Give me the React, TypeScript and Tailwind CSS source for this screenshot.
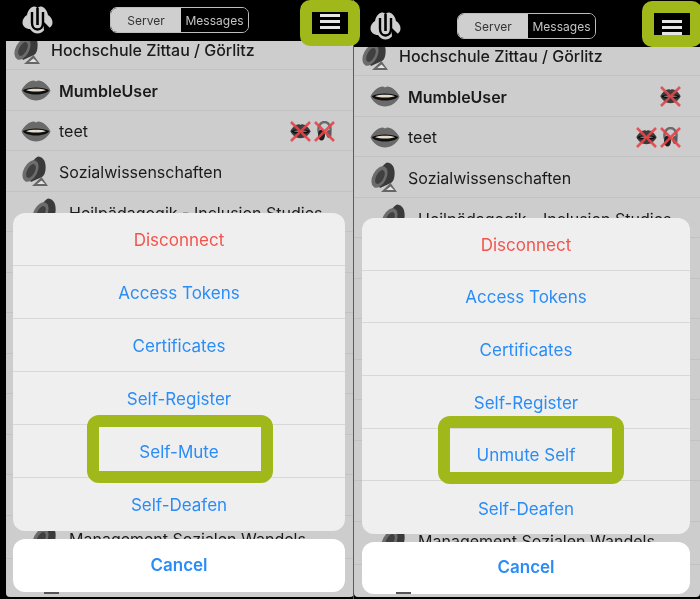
const FONT = "font-['Inter','Liberation_Sans',sans-serif]";

function Lips({ size = 30, dark }: { size?: number; dark?: boolean }) {
  return (
    <svg width={size} height={size * 0.7} viewBox="0 0 30 21" className="shrink-0">
      <path d="M0.500 10.500C3 4.500 9 0.500 12.500 0.500C14 0.500 14.500 1.500 15 1.500C15.500 1.500 16 0.500 17.500 0.500C21 0.500 27 4.500 29.500 10.500C27 16.500 21 20.500 15 20.500C9 20.500 3 16.500 0.500 10.500Z" fill={dark ? "#3c3c3c" : "#6a6a6a"} />
      <path d="M2 10C8 6.500 22 6.500 28 10C28 12 23 14.500 15 14.500C7 14.500 2 12 2 10Z" fill="#0e0e0e" />
      <path d="M5 10.200C10 8.400 20 8.400 25 10.200C20 12 10 12 5 10.200Z" fill={dark ? "#777" : "#e6dccb"} />
    </svg>
  );
}

function Horn() {
  return (
    <svg width="30" height="31" viewBox="0 0 30 31" className="shrink-0">
      <path d="M17 0.500C21 0.500 24 4 24.500 9C25 14 24 19 21 21L10 26C6 22 8 5 17 0.500Z" fill="#3a3a3a" />
      <ellipse cx="9.500" cy="15" rx="6.800" ry="11.500" transform="rotate(28 9.500 15)" fill="#6c6c6c" />
      <ellipse cx="10" cy="15" rx="3.800" ry="7.500" transform="rotate(28 10 15)" fill="#404040" />
      <path d="M11 30L20.500 21L27 30Z" fill="#666" />
      <path d="M16 28L20.500 24.500L24 28Z" fill="#e4e4e4" />
    </svg>
  );
}

function Cross({ children }: { children: React.ReactNode }) {
  return (
    <span className="relative flex h-[21px] w-[21px] items-center justify-center">
      {children}
      <svg width="21" height="21" viewBox="0 0 21 21" className="absolute inset-0">
        <path d="M1 1L20 20M20 1L1 20" stroke="#e0484d" strokeWidth="2.600" opacity="0.9" />
      </svg>
    </span>
  );
}

function MutedLips() {
  return <Cross><Lips size={21} dark /></Cross>;
}

function MutedHeadset() {
  return (
    <Cross>
      <svg width="17" height="20" viewBox="0 0 17 20">
        <path d="M3 12C1 5 5 1 8.500 1C12 1 16 5 14 12" fill="none" stroke="#6a6a6a" strokeWidth="2.500" />
        <ellipse cx="5.500" cy="14" rx="3.500" ry="5.500" fill="#1c1c1c" />
        <ellipse cx="13" cy="13" rx="2.500" ry="4" fill="#5c5c5c" />
      </svg>
    </Cross>
  );
}

function Logo() {
  return (
    <svg width="31" height="28" viewBox="0 0 31 28" className="shrink-0">
      <path d="M5 9C6 3 10 0.500 12.500 0.500C14 0.500 15 1.500 15.500 2.500C16 1.500 17 0.500 18.500 0.500C21 0.500 25 3 26 9C29 11 30.500 13.500 30.500 16.500C30.500 20.500 27 23 23 23C21 26 18 27.500 15.500 27.500C13 27.500 10 26 8 23C4 23 0.500 20.500 0.500 16.500C0.500 13.500 2 11 5 9Z" fill="#cfcfcf" />
      <path d="M10 6V17C10 21 12.500 23.500 15.500 23.500C18.500 23.500 21 21 21 17V6" fill="none" stroke="#000" strokeWidth="2.400" />
      <path d="M15.500 2V19" stroke="#000" strokeWidth="2.600" />
      <path d="M21 15L30 24H22Z" fill="#000" />
    </svg>
  );
}

function ChannelRow({ indent, name, weight, lips, badges, height = "h-[40.500px]", extra }: {
  indent: string;
  name?: string;
  weight?: string;
  lips?: boolean;
  badges?: React.ReactNode;
  height?: string;
  extra?: string;
}) {
  return (
    <div className={`flex shrink-0 items-center overflow-hidden border-b border-[#c2c2c2] pr-[19px] ${height} ${indent} ${extra ?? "pt-[2px]"}`}>
      {name ? lips ? <Lips /> : <Horn /> : null}
      <span className={`ml-[8px] whitespace-nowrap text-[16px] text-[#1b1b1b] ${weight ?? ""}`}>{name}</span>
      {badges && <span className="ml-auto flex items-center gap-[3px]">{badges}</span>}
    </div>
  );
}

function SheetButton({ label, red, height }: { label: string; red?: boolean; height: string }) {
  return (
    <div className={`flex items-center justify-center border-b border-[#d8d8d8] pt-[3px] text-[17px] last:border-b-0 ${height} ${red ? "text-[#f4534c]" : "text-[#2a8cf6]"}`}>
      {label}
    </div>
  );
}

function Panel({ side, muteLabel, selfMuted }: { side: "left" | "right"; muteLabel: string; selfMuted?: boolean }) {
  const left = side === "left";
  const rowHeight = left ? "h-[53px]" : "h-[52.700px]";
  const rowIndent = left ? "pl-[15px]" : "pl-[16px]";
  const subIndent = left ? "pl-[25px]" : "pl-[26px]";
  return (
    <section className={`relative flex h-[599px] flex-col overflow-hidden bg-black ${left ? "w-[354px] pl-[6px]" : "w-[346px] pt-[6px]"}`}>
      <header className="flex h-[41px] shrink-0 items-center bg-black pb-[1px] pl-[16px]">
        <Logo />
        <div className={`flex h-[26px] w-[139px] overflow-hidden rounded-[7px] border border-[#bdbdbd] text-[12px] ${left ? "ml-[57px]" : "ml-[56px]"}`}>
          <span className="flex w-[70px] items-center justify-center bg-[#cfcfcf] pt-[1px] text-[#333]">Server</span>
          <span className="flex flex-1 items-center justify-center bg-black pt-[1px] text-[#c4c4c4]">Messages</span>
        </div>
      </header>
      <div className="mb-[2px] flex flex-1 flex-col overflow-hidden rounded-b-[4px] bg-[#cdcdcd]">
        <ChannelRow indent="pl-[7px]" name="Hochschule Zittau / Görlitz" weight="font-medium text-[16.300px]" height="h-[29px]" extra="pb-[11px]" />
        <ChannelRow indent={rowIndent} name="MumbleUser" weight="font-semibold" lips badges={selfMuted ? <MutedLips /> : undefined} />
        <ChannelRow indent={rowIndent} name="teet" lips badges={<><MutedLips /><MutedHeadset /></>} />
        <ChannelRow indent={rowIndent} name="Sozialwissenschaften" />
        <ChannelRow indent={subIndent} name="Heilpädagogik - Inclusion Studies" extra="pt-[4px]" />
        <ChannelRow indent={subIndent} />
        <ChannelRow indent={subIndent} />
        <ChannelRow indent={subIndent} />
        <ChannelRow indent={subIndent} />
        <ChannelRow indent={subIndent} />
        <ChannelRow indent={subIndent} />
        <ChannelRow indent={subIndent} />
        <ChannelRow indent={subIndent} height="h-[43px]" name="Management Sozialen Wandels" extra={left ? "pt-[5px]" : "pb-[3px]"} />
      </div>

      <div className={`absolute ${left ? "left-[13px] top-[213px] w-[332px]" : "left-[8px] top-[218px] w-[328px]"}`}>
        <div className="overflow-hidden rounded-[12px] bg-[#efefef]">
          <SheetButton height={rowHeight} label="Disconnect" red />
          <SheetButton height={rowHeight} label="Access Tokens" />
          <SheetButton height={rowHeight} label="Certificates" />
          <SheetButton height={rowHeight} label="Self-Register" />
          <SheetButton height={rowHeight} label={muteLabel} />
          <SheetButton height={rowHeight} label="Self-Deafen" />
        </div>
        <div className={`flex items-center justify-center rounded-[12px] bg-white text-[17px] font-semibold text-[#2a8cf6] ${left ? "mt-[8px] h-[53px] pt-[1px]" : "mt-[8px] h-[52px]"}`}>
          Cancel
        </div>
      </div>
      <div className={`absolute bottom-[5px] h-[2px] w-[15px] bg-[#555] ${left ? "left-[44px]" : "left-[42px]"}`} />
      {left && <div className="absolute right-0 top-0 h-full w-[1px] bg-[#5a5a5a]" />}
    </section>
  );
}

function MenuButton({ className, lines }: { className: string; lines: string }) {
  return (
    <div className={`absolute flex h-[46px] w-[60px] items-center justify-center rounded-[10px] bg-[#a0b81a] ${className}`}>
      <div className={`flex h-[22px] w-[36px] flex-col items-center gap-[3px] bg-black ${lines}`}>
        <span className="h-[3px] w-[20px] bg-[#e6e6e6]" />
        <span className="h-[3px] w-[20px] bg-[#e6e6e6]" />
        <span className="h-[3px] w-[20px] bg-[#e6e6e6]" />
      </div>
    </div>
  );
}

export default function App() {
  return (
    <main className={`relative flex h-[599px] w-[700px] overflow-hidden bg-white blur-[0.3px] ${FONT}`}>
      <Panel side="left" muteLabel="Self-Mute" />
      <Panel side="right" muteLabel="Unmute Self" selfMuted />
      <MenuButton className="left-[300px] top-0" lines="pt-[2px]" />
      <MenuButton className="left-[642px] top-[1px]" lines="pt-[7px]" />
      <div className="absolute left-[87px] top-[415px] h-[68px] w-[186px] rounded-[12px] border-[12px] border-[#a0b81a]" />
      <div className="absolute left-[438px] top-[416px] h-[68px] w-[186px] rounded-[12px] border-[12px] border-[#a0b81a]" />
    </main>
  );
}
